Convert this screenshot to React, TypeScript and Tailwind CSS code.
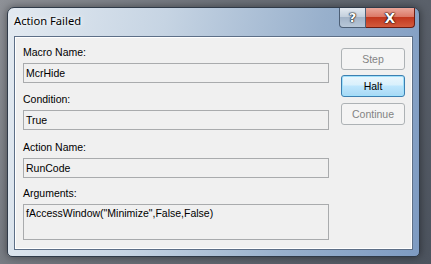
import React from "react";

const uiFont = { fontFamily: '"Liberation Sans", Arial, sans-serif' };
const titleFont = { fontFamily: '"Noto Sans", "Segoe UI", sans-serif' };

function Field({ label, value, tall, mt }: { label: string; value: string; tall?: boolean; mt: string }) {
  return (
    <div className={`flex flex-col ${mt}`}>
      <div className="h-[15px] text-[10.5px] leading-[15px] text-black">{label}</div>
      <div
        className={`mt-[3px] w-[306px] border border-[#a9abad] bg-[#f0f0f0] pl-[2px] text-[10.5px] leading-[16px] text-black ${
          tall ? "h-[36px] pt-0" : "h-[20px] pt-[1px]"
        }`}
      >
        {value}
      </div>
    </div>
  );
}

export default function App() {
  return (
    <div
      className="w-[431px] h-[264px] overflow-hidden bg-[linear-gradient(120deg,#8e9197_0%,#6c7179_40%,#4c535e_100%)] pl-[7px] pt-[7px]"
      style={uiFont}
    >
      <div className="relative w-[413px] h-[250px] rounded-t-[7px] rounded-b-[5px] border border-[#2f3a48] bg-[linear-gradient(100deg,#e3eaf1_0%,#c6d4e3_35%,#98b0cc_70%,#7e9bc2_100%)] shadow-[0_0_8px_rgba(0,0,0,0.45)] flex flex-col">
        {/* title bar */}
        <div className="h-[28px] flex items-start">
          <div
            className="pl-[6px] pt-[5px] text-[11.2px] leading-[16px] text-black [text-shadow:0_0_6px_#ffffff,0_0_3px_#ffffff]"
            style={titleFont}
          >
            Action Failed
          </div>
          <div className="ml-auto mr-[4px] flex h-[20px]">
            <div className="w-[27px] h-[20px] rounded-bl-[4px] border border-[#4d5f76] border-t-0 bg-[linear-gradient(180deg,#e3e9f0_0%,#c4d0dd_45%,#a3b4c8_50%,#b8c7d8_100%)] flex items-center justify-center">
              <span
                className="text-white font-bold text-[13px] leading-none [text-shadow:0_0_1px_#000,0_0_1px_#000,0_0_2px_#1b2838]"
                style={{ fontFamily: '"DejaVu Sans", sans-serif' }}
              >
                ?
              </span>
            </div>
            <div className="w-[49px] h-[20px] rounded-br-[4px] border border-[#6b1c12] border-t-0 border-l-0 bg-[linear-gradient(180deg,#eaa79b_0%,#dc7a68_45%,#c2381f_50%,#d35a3c_100%)] flex items-center justify-center">
              <span
                className="text-white font-bold text-[14px] leading-none [text-shadow:0_0_1px_#000,0_0_1px_#000,0_0_2px_#3a0a04]"
                style={{ fontFamily: '"DejaVu Sans", sans-serif' }}
              >
                X
              </span>
            </div>
          </div>
        </div>
        {/* client */}
        <div className="ml-[6px] mr-[6px] mb-[6px] flex-1 border border-[#5d6f87] bg-[#f0f0f0] shadow-[inset_0_0_0_1px_#ffffff] flex pl-[8px] pt-[8px]">
          <div className="flex flex-col">
            <Field label="Macro Name:" value="McrHide" mt="mt-0" />
            <Field label="Condition:" value="True" mt="mt-[9px]" />
            <Field label="Action Name:" value="RunCode" mt="mt-[10px]" />
            <Field label="Arguments:" value={'fAccessWindow("Minimize",False,False)'} tall mt="mt-[8px]" />
          </div>
          <div className="ml-[12px] pt-[3px] flex flex-col">
            <div className="w-[64px] h-[22px] rounded-[3px] border border-[#adb2b5] bg-[#f4f4f4] text-[10.5px] leading-[20px] text-center text-[#838383]">
              Step
            </div>
            <div className="mt-[5px] w-[64px] h-[22px] rounded-[3px] border border-[#3c7fb1] bg-[linear-gradient(180deg,#eaf6fd_0%,#d9f0fc_45%,#bee6fd_50%,#a7d9f5_100%)] shadow-[inset_0_0_0_1px_#9fe0fb] text-[10.5px] leading-[20px] text-center text-black">
              Halt
            </div>
            <div className="mt-[6px] w-[64px] h-[22px] rounded-[3px] border border-[#adb2b5] bg-[#f4f4f4] text-[10.5px] leading-[20px] text-center text-[#838383]">
              Continue
            </div>
          </div>
        </div>
      </div>
    </div>
  );
}
